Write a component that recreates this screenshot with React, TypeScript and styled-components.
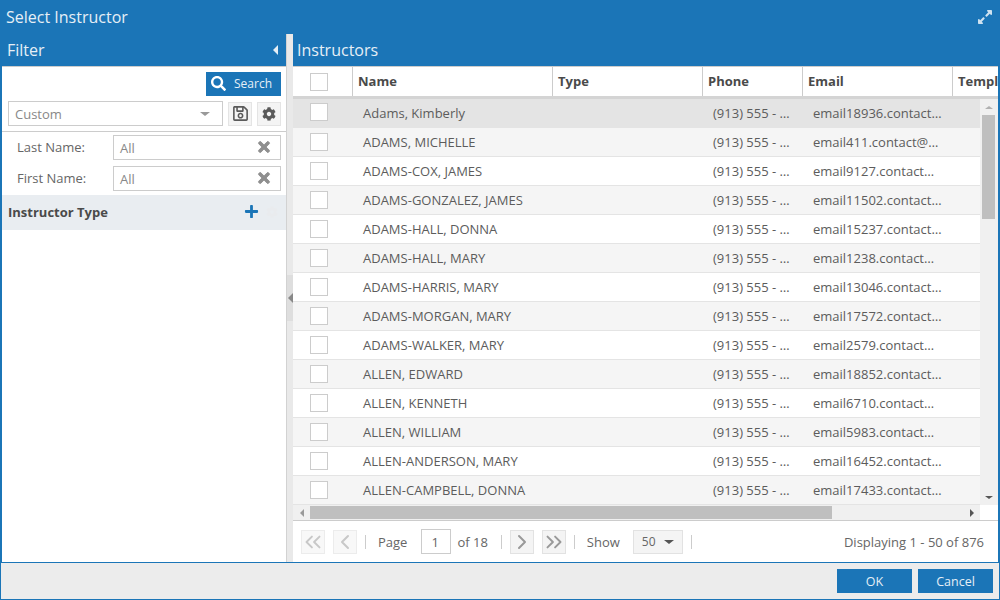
import React from 'react';
import styled, { createGlobalStyle } from 'styled-components';
import { FaSearch, FaRegSave, FaCog, FaTimes, FaPlus, FaExpandAlt } from 'react-icons/fa';
import { ChevronLeft, ChevronRight, ChevronsLeft, ChevronsRight } from 'lucide-react';

const BLUE = '#1b75b7';

const GlobalStyle = createGlobalStyle`
  html, body {
    margin: 0;
    padding: 0;
    background: #fff;
  }
  * {
    box-sizing: border-box;
  }
`;

const Dialog = styled.div`
  width: 1000px;
  height: 600px;
  display: flex;
  flex-direction: column;
  overflow: hidden;
  background: ${BLUE};
  font-family: "Open Sans", "Liberation Sans", sans-serif;
  font-size: 13px;
  color: #555;
`;

const TitleBar = styled.div`
  height: 33px;
  flex: none;
  display: flex;
  align-items: center;
  justify-content: space-between;
  padding: 0 7px 0 6px;
  font-size: 16px;
  color: #e6eff6;
  svg {
    font-size: 16px;
    color: #cfe2f0;
  }
`;

const Main = styled.div`
  height: 529px;
  flex: none;
  display: flex;
  padding: 0 2px 0 2px;
`;

const FilterPanel = styled.div`
  width: 284px;
  flex: none;
  display: flex;
  flex-direction: column;
`;

const PanelHeader = styled.div`
  height: 33px;
  flex: none;
  display: flex;
  align-items: center;
  justify-content: space-between;
  padding: 0 8px 0 4px;
  font-size: 16px;
  color: #e6eff6;
`;

const FilterTitle = styled.span`
  margin-left: 1px;
`;

const Caret = styled.span<{ $dir: 'left' | 'right' | 'up' | 'down'; $size?: number; $color?: string }>`
  display: block;
  flex: none;
  width: 0;
  height: 0;
  border-style: solid;
  border-color: transparent;
  border-width: ${p => p.$size ?? 4}px;
  ${p => {
    const c = p.$color ?? '#888';
    const s = p.$size ?? 4;
    switch (p.$dir) {
      case 'left':
        return `border-right-color: ${c}; border-left-width: 0;`;
      case 'right':
        return `border-left-color: ${c}; border-right-width: 0;`;
      case 'up':
        return `border-bottom-color: ${c}; border-top-width: 0; border-left-width: ${s + 1}px; border-right-width: ${s + 1}px;`;
      default:
        return `border-top-color: ${c}; border-bottom-width: 0; border-left-width: ${s + 1}px; border-right-width: ${s + 1}px;`;
    }
  }}
`;

const FilterBody = styled.div`
  flex: 1;
  background: #fff;
  border-top: 1px solid #ccc;
  display: flex;
  flex-direction: column;
`;

const SearchRow = styled.div`
  display: flex;
  justify-content: flex-end;
  padding: 5px 5px 0 0;
`;

const SearchButton = styled.button`
  width: 75px;
  height: 24px;
  padding: 0 0 1px 5px;
  border: 0;
  background: ${BLUE};
  color: #e6eff6;
  font: inherit;
  font-size: 12px;
  display: flex;
  align-items: center;
  gap: 8px;
  svg {
    font-size: 15px;
    color: #fff;
  }
`;

const ComboRow = styled.div`
  display: flex;
  align-items: center;
  padding: 5px 5px 5px 6px;
  border-bottom: 1px solid #ccc;
  margin-bottom: 3px;
  box-sizing: content-box;
  height: 25px;
`;

const Combo = styled.div`
  width: 215px;
  height: 25px;
  border: 1px solid #ccc;
  display: flex;
  align-items: center;
  justify-content: space-between;
  padding: 0 12px 0 6px;
  color: #888;
  margin-right: 5px;
`;

const ToolButton = styled.button<{ $gap?: boolean }>`
  width: 24px;
  height: 24px;
  padding: 0;
  margin-left: ${p => (p.$gap ? 5 : 0)}px;
  border: 1px solid #e4e4e4;
  background: #f4f4f4;
  color: #5a5a5a;
  display: flex;
  align-items: center;
  justify-content: center;
`;

const FieldRow = styled.div`
  display: flex;
  align-items: center;
  height: 25px;
  margin: 0 5px 6px 15px;
`;

const FieldLabel = styled.label`
  width: 96px;
  flex: none;
  color: #666;
  padding-bottom: 2px;
`;

const FieldBox = styled.div`
  flex: 1;
  height: 25px;
  border: 1px solid #ccc;
  display: flex;
  align-items: center;
  justify-content: space-between;
  padding: 1px 8px 0 6px;
  color: #888;
  svg {
    font-size: 16px;
    color: #8f8f8f;
    stroke: currentColor;
    stroke-width: 30px;
    margin-top: -2px;
  }
`;

const SectionHeader = styled.div`
  height: 35px;
  margin-top: -2px;
  background: #e9edf1;
  display: flex;
  align-items: center;
  padding: 0 8px 2px 6px;
  font-weight: 700;
  color: #4a4a4a;
  justify-content: space-between;
`;

const SectionIcons = styled.span`
  display: flex;
  align-items: center;
  gap: 7px;
  color: ${BLUE};
  svg {
    font-size: 15px;
  }
  svg + svg {
    color: #e9ebee;
    font-size: 12px;
  }
`;

const Splitter = styled.div`
  width: 7px;
  flex: none;
  margin-top: 1px;
  background: #e9e9e9;
  border-left: 1px solid #d2d2d2;
  display: flex;
  align-items: center;
  justify-content: center;
`;

const SplitterHandle = styled.div`
  height: 46px;
  width: 6px;
  background: #dedede;
  display: flex;
  align-items: center;
  justify-content: center;
`;

const GridPanel = styled.div`
  width: 705px;
  flex: none;
  display: flex;
  flex-direction: column;
`;

const GridBody = styled.div`
  flex: 1;
  background: #fff;
  display: flex;
  flex-direction: column;
  min-height: 0;
`;

const ColumnHeaders = styled.div`
  height: 33px;
  flex: none;
  display: flex;
  border-top: 1px solid #ccc;
  border-bottom: 3px solid #d4d4d4;
  overflow: hidden;
`;

const HeadCell = styled.div<{ $w: number }>`
  width: ${p => p.$w}px;
  flex: none;
  display: flex;
  align-items: center;
  padding: 0 0 2px 5px;
  border-right: 1px solid #ccc;
  font-weight: 700;
  color: #4a4a4a;
  white-space: nowrap;
  &:last-child {
    border-right: 0;
  }
`;

const CheckCell = styled.div`
  width: 60px;
  flex: none;
  display: flex;
  align-items: center;
  padding-left: 17px;
`;

const HeadCheckCell = styled(CheckCell)`
  border-right: 1px solid #ccc;
`;

const CheckBox = styled.span`
  display: block;
  width: 18px;
  height: 18px;
  background: #fff;
  border: 1px solid #ccc;
`;

const ScrollArea = styled.div`
  flex: none;
  height: 406px;
  display: flex;
`;

const Rows = styled.div`
  width: 687px;
  flex: none;
  overflow: hidden;
`;

const Row = styled.div<{ $tone: 'hover' | 'alt' | 'plain' }>`
  height: 29px;
  display: flex;
  align-items: center;
  border-bottom: 1px solid #e4e4e4;
  background: ${p => (p.$tone === 'hover' ? '#e4e4e4' : p.$tone === 'alt' ? '#f5f5f5' : '#fff')};
  &:first-child > ${CheckCell} {
    padding-bottom: 2px;
  }
`;

const Cell = styled.div<{ $w: number }>`
  width: ${p => p.$w}px;
  flex: none;
  padding-left: 10px;
  color: #5c5c5c;
  white-space: nowrap;
`;

const VScroll = styled.div`
  width: 18px;
  flex: none;
  background: #f0f0f0;
  display: flex;
  flex-direction: column;
  align-items: center;
  padding: 0 3px 0 2px;
`;

const VArrow = styled.div`
  height: 16px;
  flex: none;
  display: flex;
  align-items: center;
  justify-content: center;
`;

const VThumb = styled.div`
  width: 13px;
  height: 104px;
  flex: none;
  background: #bfbfbf;
`;

const VTrack = styled.div`
  flex: 1;
`;

const HScroll = styled.div`
  height: 16px;
  flex: none;
  display: flex;
  border-bottom: 1px solid #ccc;
`;

const HTrack = styled.div`
  width: 687px;
  flex: none;
  background: #f0f0f0;
  display: flex;
  align-items: center;
  height: 15px;
`;

const HArrow = styled.div`
  width: 17px;
  flex: none;
  display: flex;
  align-items: center;
  justify-content: center;
`;

const HThumb = styled.div`
  width: 522px;
  height: 13px;
  flex: none;
  background: #bfbfbf;
`;

const HRest = styled.div`
  flex: 1;
`;

const Pager = styled.div`
  flex: 1;
  display: flex;
  align-items: center;
  padding: 0 14px 0 8px;
  color: #666;
`;

const PageButton = styled.button<{ $off?: boolean }>`
  width: 24px;
  height: 24px;
  padding: 0;
  border: 1px solid ${p => (p.$off ? '#ececec' : '#e2e2e2')};
  background: ${p => (p.$off ? '#f8f8f8' : '#f4f4f4')};
  color: ${p => (p.$off ? '#c8c8c8' : '#999')};
  display: flex;
  align-items: center;
  justify-content: center;
  margin-right: 8px;
  svg {
    flex: none;
  }
`;

const PagerSep = styled.span`
  width: 1px;
  height: 14px;
  flex: none;
  background: #ccc;
`;

const LabelledSep = styled(PagerSep)`
  margin-right: 12px;
`;

const ButtonSep = styled(PagerSep)`
  margin-right: 8px;
`;

const PageInput = styled.div`
  width: 30px;
  height: 25px;
  border: 1px solid #ccc;
  display: flex;
  align-items: center;
  padding-left: 9px;
  color: #666;
  margin: 0 6px 0 14px;
`;

const PagerText = styled.span`
  white-space: nowrap;
`;

const OfPages = styled(PagerText)`
  margin-right: 13px;
`;

const ShowSelect = styled.div`
  width: 50px;
  height: 24px;
  border: 1px solid #e2e2e2;
  background: #f4f4f4;
  display: flex;
  align-items: center;
  justify-content: space-between;
  padding: 0 8px 0 8px;
  font-size: 12px;
  margin: 0 8px 0 13px;
`;

const Displaying = styled(PagerText)`
  margin-left: auto;
`;

const Footer = styled.div`
  height: 36px;
  flex: none;
  margin: 1px 1px 1px 1px;
  background: #ececec;
  display: flex;
  align-items: center;
  justify-content: flex-end;
  gap: 6px;
  padding-right: 6px;
`;

const FootButton = styled.button`
  width: 75px;
  height: 24px;
  border: 0;
  padding: 0;
  background: ${BLUE};
  color: #e6eff6;
  font: inherit;
  font-size: 12.5px;
`;

const columns = [
  { name: 'Name', w: 200 },
  { name: 'Type', w: 150 },
  { name: 'Phone', w: 100 },
  { name: 'Email', w: 150 },
  { name: 'Template', w: 100 },
];

const people = [
  ['Adams, Kimberly', 'email18936.contact…'],
  ['ADAMS, MICHELLE', 'email411.contact@…'],
  ['ADAMS-COX, JAMES', 'email9127.contact…'],
  ['ADAMS-GONZALEZ, JAMES', 'email11502.contact…'],
  ['ADAMS-HALL, DONNA', 'email15237.contact…'],
  ['ADAMS-HALL, MARY', 'email1238.contact…'],
  ['ADAMS-HARRIS, MARY', 'email13046.contact…'],
  ['ADAMS-MORGAN, MARY', 'email17572.contact…'],
  ['ADAMS-WALKER, MARY', 'email2579.contact…'],
  ['ALLEN, EDWARD', 'email18852.contact…'],
  ['ALLEN, KENNETH', 'email6710.contact…'],
  ['ALLEN, WILLIAM', 'email5983.contact…'],
  ['ALLEN-ANDERSON, MARY', 'email16452.contact…'],
  ['ALLEN-CAMPBELL, DONNA', 'email17433.contact…'],
];

const App: React.FC = () => {
  return (
    <Dialog>
      <GlobalStyle />
      <TitleBar>
        Select Instructor
        <FaExpandAlt />
      </TitleBar>
      <Main>
        <FilterPanel>
          <PanelHeader>
            <FilterTitle>Filter</FilterTitle>
            <Caret $dir="left" $size={5} $color="#e6eff6" />
          </PanelHeader>
          <FilterBody>
            <SearchRow>
              <SearchButton>
                <FaSearch />
                Search
              </SearchButton>
            </SearchRow>
            <ComboRow>
              <Combo>
                Custom
                <Caret $dir="down" $size={4} $color="#999" />
              </Combo>
              <ToolButton>
                <FaRegSave size={17} />
              </ToolButton>
              <ToolButton $gap>
                <FaCog size={14} />
              </ToolButton>
            </ComboRow>
            <FieldRow>
              <FieldLabel>Last Name:</FieldLabel>
              <FieldBox>
                All
                <FaTimes />
              </FieldBox>
            </FieldRow>
            <FieldRow>
              <FieldLabel>First Name:</FieldLabel>
              <FieldBox>
                All
                <FaTimes />
              </FieldBox>
            </FieldRow>
            <SectionHeader>
              Instructor Type
              <SectionIcons>
                <FaPlus />
                <FaCog />
              </SectionIcons>
            </SectionHeader>
          </FilterBody>
        </FilterPanel>
        <Splitter>
          <SplitterHandle>
            <Caret $dir="left" $size={5} />
          </SplitterHandle>
        </Splitter>
        <GridPanel>
          <PanelHeader>Instructors</PanelHeader>
          <GridBody>
            <ColumnHeaders>
              <HeadCheckCell>
                <CheckBox />
              </HeadCheckCell>
              {columns.map(c => (
                <HeadCell key={c.name} $w={c.w}>
                  {c.name}
                </HeadCell>
              ))}
            </ColumnHeaders>
            <ScrollArea>
              <Rows>
                {people.map(([name, email], i) => (
                  <Row key={email} $tone={i === 0 ? 'hover' : i % 2 ? 'alt' : 'plain'}>
                    <CheckCell>
                      <CheckBox />
                    </CheckCell>
                    <Cell $w={200}>{name}</Cell>
                    <Cell $w={150} />
                    <Cell $w={100}>(913) 555 - …</Cell>
                    <Cell $w={150}>{email}</Cell>
                  </Row>
                ))}
              </Rows>
              <VScroll>
                <VArrow>
                  <Caret $dir="up" $size={3} $color="#b0b0b0" />
                </VArrow>
                <VThumb />
                <VTrack />
                <VArrow>
                  <Caret $dir="down" $size={3} $color="#555" />
                </VArrow>
              </VScroll>
            </ScrollArea>
            <HScroll>
              <HTrack>
                <HArrow>
                  <Caret $dir="left" $size={4} $color="#999" />
                </HArrow>
                <HThumb />
                <HRest />
                <HArrow>
                  <Caret $dir="right" $size={4} $color="#555" />
                </HArrow>
              </HTrack>
            </HScroll>
            <Pager>
              <PageButton $off>
                <ChevronsLeft size={26} strokeWidth={1.8} />
              </PageButton>
              <PageButton $off>
                <ChevronLeft size={24} strokeWidth={2} />
              </PageButton>
              <LabelledSep />
              <PagerText>Page</PagerText>
              <PageInput>1</PageInput>
              <OfPages>of 18</OfPages>
              <ButtonSep />
              <PageButton>
                <ChevronRight size={24} strokeWidth={2} />
              </PageButton>
              <PageButton>
                <ChevronsRight size={26} strokeWidth={1.8} />
              </PageButton>
              <LabelledSep />
              <PagerText>Show</PagerText>
              <ShowSelect>
                50
                <Caret $dir="down" $size={4} $color="#555" />
              </ShowSelect>
              <PagerSep />
              <Displaying>Displaying 1 - 50 of 876</Displaying>
            </Pager>
          </GridBody>
        </GridPanel>
      </Main>
      <Footer>
        <FootButton>OK</FootButton>
        <FootButton>Cancel</FootButton>
      </Footer>
    </Dialog>
  );
};

export default App;
